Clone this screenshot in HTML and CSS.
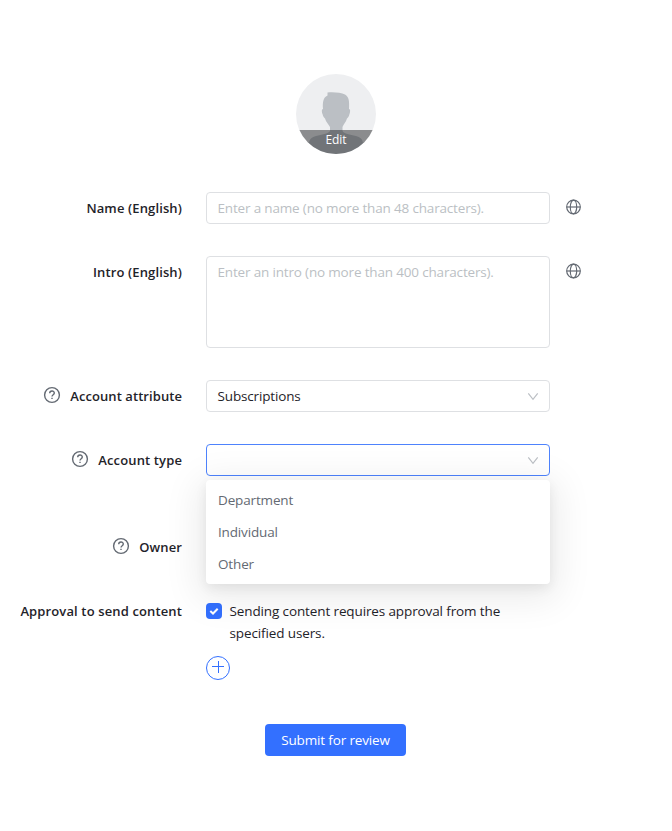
FILE: index.html
```html
<!DOCTYPE html>
<html lang="en">
<head>
  <meta charset="UTF-8">
  <meta name="viewport" content="width=device-width, initial-scale=1.0">
  <title>Create account</title>
  <link rel="stylesheet" href="styles.css">
</head>
<body>
  <form class="account-form">
    <div class="avatar">
      <svg width="80" height="80" viewBox="0 0 80 80">
        <rect width="80" height="80" fill="#eeeff1"/>
        <path fill="#bbbfc4" d="M31.500 18.500C36 17.800 45 18.300 49 20.500C53 23 53.500 27 53 35C54.500 35 54.300 38 53.500 40C53 42 52.500 43 51 44.500C50 48 47.500 50 46.500 53V57C48 60 54 60.500 60 62C64 63 67 65 67 70V80H13V70C13 65 16 63 20 62C26 60.500 32 60 34 57V53C32.500 50 30 48 29 44.500C27.500 43 27 42 26.500 40C25.700 38 25.500 35 27 35C26.500 29 27 23.500 31.500 21.500Z"/>
      </svg>
      <span class="avatar-edit">Edit</span>
    </div>

    <div class="row">
      <label class="label" for="name">Name (English)</label>
      <input class="field" id="name" type="text" placeholder="Enter a name (no more than 48 characters).">
      <svg class="globe" width="16" height="16" viewBox="0 0 16 16">
        <circle cx="8.500" cy="8" r="6.800"/>
        <ellipse cx="8.500" cy="8" rx="3.200" ry="6.800"/>
        <path d="M1.700 8H15.300"/>
      </svg>
    </div>

    <div class="row">
      <label class="label" for="intro">Intro (English)</label>
      <textarea class="field intro" id="intro" placeholder="Enter an intro (no more than 400 characters)."></textarea>
      <svg class="globe" width="16" height="16" viewBox="0 0 16 16">
        <circle cx="8.500" cy="8" r="6.800"/>
        <ellipse cx="8.500" cy="8" rx="3.200" ry="6.800"/>
        <path d="M1.700 8H15.300"/>
      </svg>
    </div>

    <div class="row">
      <div class="label attribute-label">
        <svg class="help" width="18" height="18" viewBox="0 0 18 18">
          <circle cx="9" cy="9" r="7.400"/>
          <path d="M6.700 7.300C6.700 4.300 11.300 4.300 11.300 7.100C11.300 8.800 9 8.800 9 10.600M9 11.700V13"/>
        </svg>
        <span>Account attribute</span>
      </div>
      <div class="select">
        <span>Subscriptions</span>
        <svg class="arrow" width="12" height="12" viewBox="0 0 12 12"><path d="M1.300 3.300L6 9.300L10.700 3.300"/></svg>
      </div>
    </div>

    <div class="row">
      <div class="label">
        <svg class="help" width="18" height="18" viewBox="0 0 18 18">
          <circle cx="9" cy="9" r="7.400"/>
          <path d="M6.700 7.300C6.700 4.300 11.300 4.300 11.300 7.100C11.300 8.800 9 8.800 9 10.600M9 11.700V13"/>
        </svg>
        <span>Account type</span>
      </div>
      <div class="select select-open">
        <span></span>
        <svg class="arrow" width="12" height="12" viewBox="0 0 12 12"><path d="M1.300 3.300L6 9.300L10.700 3.300"/></svg>
        <ul class="dropdown">
          <li class="option">Department</li>
          <li class="option">Individual</li>
          <li class="option">Other</li>
        </ul>
      </div>
    </div>

    <div class="row owner-row">
      <div class="label">
        <svg class="help" width="18" height="18" viewBox="0 0 18 18">
          <circle cx="9" cy="9" r="7.400"/>
          <path d="M6.700 7.300C6.700 4.300 11.300 4.300 11.300 7.100C11.300 8.800 9 8.800 9 10.600M9 11.700V13"/>
        </svg>
        <span>Owner</span>
      </div>
    </div>

    <div class="row">
      <div class="label">Approval to send content</div>
      <div class="approval">
        <div class="check-line">
          <svg class="checkbox" width="16" height="16" viewBox="0 0 16 16">
            <rect width="16" height="16" rx="4" fill="#3370ff"/>
            <path d="M4.300 8L7 10.500L11.700 5.700" fill="none" stroke="#fff" stroke-width="2"/>
          </svg>
          <span>Sending content requires approval from the specified users.</span>
        </div>
        <svg class="add" width="24" height="24" viewBox="0 0 24 24">
          <circle cx="12" cy="12" r="11.500"/>
          <path d="M6 10.500H18M12.500 5V17"/>
        </svg>
      </div>
    </div>

    <button class="submit" type="button">Submit for review</button>
  </form>
</body>
</html>
```

FILE: styles.css
```css
* {
  box-sizing: border-box;
}
body {
  margin: 0;
  font-family: "Open Sans", "Noto Sans", sans-serif;
  font-size: 13.5px;
  line-height: 22px;
  letter-spacing: -0.15px;
  color: #1f2329;
  background: #fff;
}
.account-form {
  display: flex;
  flex-direction: column;
  padding-top: 74px;
}
.avatar {
  position: relative;
  align-self: center;
  width: 80px;
  height: 80px;
  margin-bottom: 38px;
  border-radius: 50%;
  overflow: hidden;
}
.avatar svg {
  display: block;
}
.avatar-edit {
  position: absolute;
  left: 0;
  right: 0;
  bottom: 0;
  height: 24px;
  line-height: 20px;
  font-size: 12px;
  letter-spacing: -0.1px;
  text-align: center;
  color: #fff;
  background: rgba(40, 42, 44, 0.5);
}
.row {
  display: grid;
  grid-template-columns: 182px 344px 16px;
  column-gap: 24px;
  align-items: start;
  margin-bottom: 32px;
}
.label {
  display: flex;
  justify-content: flex-end;
  align-items: center;
  height: 32px;
  font-weight: 600;
  font-size: 13px;
  letter-spacing: 0.13px;
  white-space: nowrap;
}
.attribute-label {
  letter-spacing: 0.07px;
}
.help {
  margin: -2px 9px 0 0;
  fill: none;
  stroke: #646a73;
  stroke-width: 1.4;
}
.field {
  display: block;
  width: 344px;
  height: 32px;
  padding: 4px 10.5px;
  border: 1px solid #dee0e3;
  border-radius: 4px;
  font: inherit;
  letter-spacing: -0.17px;
  background: #fff;
  outline: none;
  resize: none;
}
.field::placeholder {
  color: #bbbfc4;
}
.intro {
  height: 92px;
}
.globe {
  margin: 7px 0 0 -9px;
  fill: none;
  stroke: #646a73;
  stroke-width: 1.2;
}
.select {
  position: relative;
  display: flex;
  justify-content: space-between;
  align-items: center;
  height: 32px;
  padding: 0 10px 0 10.5px;
  border: 1px solid #dee0e3;
  border-radius: 4px;
}
.select-open {
  border-color: #4e83fd;
}
.arrow {
  fill: none;
  stroke: #bbbfc4;
  stroke-width: 1.2;
}
.dropdown {
  position: absolute;
  top: 35px;
  left: -1px;
  width: 344px;
  margin: 0;
  padding: 4px 0;
  list-style: none;
  background: #fff;
  border-radius: 4px;
  box-shadow: 0 4px 12px rgba(0, 0, 0, 0.07), 0 8px 36px 8px rgba(0, 0, 0, 0.08);
}
.option {
  height: 32px;
  padding: 5px 12px;
  color: #646a73;
}
.owner-row {
  margin-top: 23px;
}
.approval {
  padding-top: 5px;
}
.check-line {
  display: flex;
  gap: 7.5px;
  width: 310px;
  letter-spacing: -0.12px;
}
.checkbox {
  flex: none;
  margin-top: 3px;
}
.add {
  display: block;
  margin-top: 12px;
  fill: none;
  stroke: #3370ff;
}
.submit {
  width: 141px;
  height: 32px;
  margin: 12px 0 0 265px;
  padding: 0;
  border: none;
  border-radius: 4px;
  font: inherit;
  letter-spacing: inherit;
  color: #fff;
  background: #3370ff;
}
```
